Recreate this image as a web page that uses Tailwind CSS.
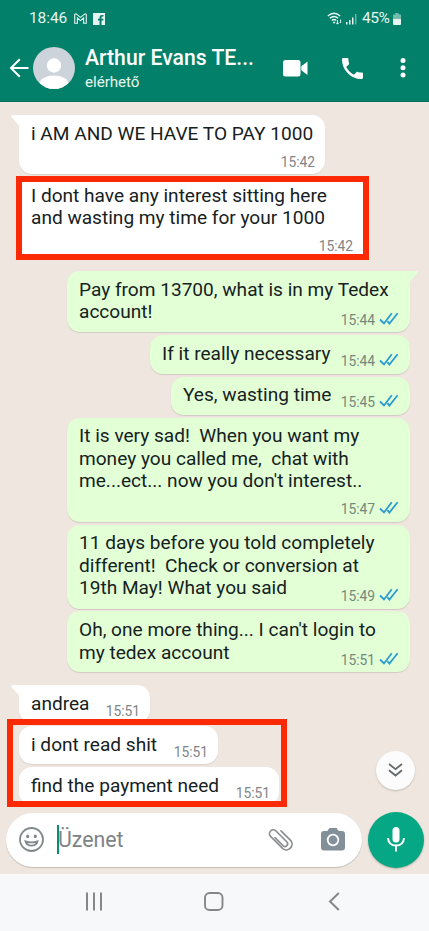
<!DOCTYPE html>
<html lang="hu">
<head>
<meta charset="utf-8">
<title>Chat</title>
<script src="https://cdn.jsdelivr.net/npm/@tailwindcss/browser@4"></script>
</head>
<body class="bg-[#efe7df] overflow-hidden">
<svg class="hidden">
  <symbol id="ticks" viewBox="0 0 20 13"><path d="M1 7.5 L5 11.5 L12.8 1.2 M8.4 9.2 L10.4 11.5 L18.6 1.2" fill="none" stroke="#2b9bd0" stroke-width="1.8"/></symbol>
</svg>
<div class="relative flex flex-col w-[429px] h-[931px] overflow-hidden font-[Roboto,sans-serif] text-[#16211e]">

  <header class="h-[102px] shrink-0 bg-[#028069] border-b border-[#0b6f5c] text-white flex flex-col">
    <div class="h-[36px] pt-[1px] pl-[29px] pr-[28px] flex items-center text-[15.5px] text-[#e6f5f0]">
      <span class="w-[39px] tracking-[-0.1px]">18:46</span>
      <svg class="ml-[6px] w-[13px] h-[11px]" viewBox="0 0 13 11" fill="none" stroke="currentColor" stroke-width="1.1"><path d="M.7 10.2V1.6Q1.2.5 2.4 1.1L6.5 4.4 10.6 1.1Q11.8.5 12.3 1.6V10.2H9.6V5L6.5 7.6 3.4 5V10.2Z"/></svg>
      <svg class="ml-[6px] w-[12px] h-[12px]" viewBox="0 0 12 12"><path fill="currentColor" d="M0 0H12V12H8.5V7.6H10.2L10.5 5.7H8.5V4.5Q8.5 3.6 9.5 3.6H10.5V2H9Q6.5 2 6.5 4.4V5.7H4.9V7.6H6.5V12H0Z"/></svg>
      <span class="flex-1"></span>
      <svg class="w-[16px] h-[13px]" viewBox="0 0 16 13" fill="none" stroke="currentColor" stroke-width="1.4"><path d="M.8 4Q7 -1.6 13.2 4M2.8 6.3Q7 2.6 11.2 6.3M4.8 8.5Q7 6.6 9.2 8.5"/><circle cx="7" cy="10.6" r="1" fill="currentColor" stroke="none"/><path stroke-width="1" d="M10.5 8V12M9 10.6l1.5 1.6 1.5-1.6M13.6 11V7.5"/></svg>
      <svg class="ml-[3px] w-[11px] h-[12px]" viewBox="0 0 11 12" fill="currentColor"><path d="M0 9h1.5v2.5H0zM3 7h1.5v4.500H3zM6 4.500h1.500v7H6z"/><path opacity=".45" d="M9 1h1.500v10.500H9z"/></svg>
      <span class="ml-[5px] w-[29px] tracking-[-0.4px]">45%</span>
      <svg class="ml-[2px] w-[8px] h-[12px]" viewBox="0 0 8 12" fill="currentColor"><path opacity=".5" d="M2.300 0h3.400v1.500H8V6H0V1.500h2.300z"/><path d="M0 6h8v5a1 1 0 0 1-1 1H1a1 1 0 0 1-1-1z"/></svg>
    </div>
    <div class="h-[65px] flex items-center pl-[9px] pb-[1px]">
      <svg class="w-[20px] h-[20px]" viewBox="0 0 20 20" fill="none" stroke="white" stroke-width="2"><path d="M19.500 10H2M10.800 1.200L2 10l8.800 8.800"/></svg>
      <svg class="ml-[4px] w-[42px] h-[42px]" viewBox="0 0 42 42"><defs><clipPath id="av"><circle cx="21" cy="21" r="21"/></clipPath></defs><g clip-path="url(#av)"><path fill="#cdd3da" d="M0 0h42v42H0z"/><circle cx="21" cy="18.500" r="7.200" fill="#fff"/><ellipse cx="21" cy="37" rx="14.500" ry="8.500" fill="#fff"/></g></svg>
      <div class="ml-[10px] w-[180px] pt-[2px] flex flex-col whitespace-nowrap">
        <span class="text-[21.2px] leading-[25px] font-medium">Arthur Evans TE...</span>
        <span class="text-[15.2px] leading-[24px] tracking-[-0.05px] text-[#e6f5f0]">elérhető</span>
      </div>
      <svg class="ml-[18px] w-[25px] h-[17px]" viewBox="0 0 25 17" fill="#fff"><rect width="17.500" height="16.500" rx="2.500"/><path d="M18.300 6.200L24.500 1.500V15L18.300 10.300z"/></svg>
      <svg class="ml-[34px] w-[21px] h-[21px]" viewBox="3 3 18 18" fill="#fff"><path d="M6.620 10.790c1.440 2.830 3.760 5.140 6.590 6.590l2.200-2.200c.27-.27.67-.36 1.020-.24 1.120.37 2.330.57 3.570.57.550 0 1 .45 1 1V20c0 .55-.45 1-1 1-9.390 0-17-7.610-17-17 0-.55.45-1 1-1h3.500c.55 0 1 .45 1 1 0 1.250.200 2.450.570 3.570.110.350.030.740-.250 1.020l-2.200 2.200z"/></svg>
      <svg class="ml-[37px] w-[6px] h-[20px]" viewBox="0 0 6 20" fill="#fff"><circle cx="3" cy="2.600" r="2.500"/><circle cx="3" cy="9.800" r="2.500"/><circle cx="3" cy="17" r="2.500"/></svg>
    </div>
  </header>

  <main class="h-[772px] shrink-0 pt-[12.5px] pl-[19px] pr-[19px] flex flex-col items-start text-[19.08px] leading-[22.7px] whitespace-pre">
    <div class="relative grid w-[306px] h-[59.5px] bg-white rounded-[13px] rounded-tl-none pl-[12px] pr-[10px] pt-[8px] pb-[5px] shadow-[0_1px_1px_#00000018]">
      <svg class="absolute -left-[8px] top-0 w-[9px] h-[12px]" viewBox="0 0 9 12"><path fill="#fff" d="M9 0H1.500Q-.8.400 1 2.500L8 10.500 9 12z"/></svg>
      <p class="[grid-area:1/1]">i AM AND WE HAVE TO PAY 1000</p>
      <time class="[grid-area:1/1] self-end justify-self-end text-[13.800px] leading-[14px] text-[#7f8486]">15:42</time>
    </div>
    <div class="-ml-[3px] mt-[2px] grid w-[353px] h-[84px] border-[6px] border-[#fb2a04] bg-white pl-[9px] pr-[10px] pt-[2.500px] pb-[1px]">
      <p class="[grid-area:1/1]"><span class="block w-fit">I dont have any interest sitting here</span><span class="block w-fit">and wasting my time for your 1000</span></p>
      <time class="[grid-area:1/1] self-end justify-self-end text-[13.800px] leading-[14px] text-[#7f8486]">15:42</time>
    </div>

    <div class="relative self-end mt-[10.500px] grid w-[343px] h-[61.500px] bg-[#e2ffd6] rounded-[13px] rounded-tr-none pl-[12px] pr-[11px] pt-[8px] pb-[5.500px] shadow-[0_1px_1px_#00000020]">
      <svg class="absolute -right-[8px] top-0 w-[9px] h-[12px]" viewBox="0 0 9 12"><path fill="#e2ffd6" d="M0 0H7.500Q9.800.400 8 2.500L1 10.500 0 12z"/></svg>
      <p class="[grid-area:1/1]"><span class="block w-fit">Pay from 13700, what is in my Tedex</span><span class="block w-fit">account!</span></p>
      <time class="[grid-area:1/1] self-end justify-self-end flex gap-[4px] text-[13.800px] leading-[14px] text-[#75877a]">15:44<svg class="-mt-[1px] w-[20px] h-[13px]"><use href="#ticks"/></svg></time>
    </div>
    <div class="self-end mt-[3px] grid w-[260px] h-[38.500px] bg-[#e2ffd6] rounded-[13px] pl-[12px] pr-[11px] pt-[8px] pb-[6px] shadow-[0_1px_1px_#00000020]">
      <p class="[grid-area:1/1]">If it really necessary</p>
      <time class="[grid-area:1/1] self-end justify-self-end flex gap-[4px] text-[13.800px] leading-[14px] text-[#75877a]">15:44<svg class="-mt-[1px] w-[20px] h-[13px]"><use href="#ticks"/></svg></time>
    </div>
    <div class="self-end mt-[3px] grid w-[239px] h-[38px] bg-[#e2ffd6] rounded-[13px] pl-[12px] pr-[11px] pt-[7px] pb-[6px] shadow-[0_1px_1px_#00000020]">
      <p class="[grid-area:1/1]">Yes, wasting time</p>
      <time class="[grid-area:1/1] self-end justify-self-end flex gap-[4px] text-[13.800px] leading-[14px] text-[#75877a]">15:45<svg class="-mt-[1px] w-[20px] h-[13px]"><use href="#ticks"/></svg></time>
    </div>
    <div class="self-end mt-[3px] grid w-[343px] h-[104px] bg-[#e2ffd6] rounded-[13px] pl-[12px] pr-[11px] pt-[7.500px] pb-[5.500px] shadow-[0_1px_1px_#00000020]">
      <p class="[grid-area:1/1]"><span class="block w-fit">It is very sad!  When you want my</span><span class="block w-fit">money you called me,  chat with</span><span class="block w-fit">me...ect... now you don't interest..</span></p>
      <time class="[grid-area:1/1] self-end justify-self-end flex gap-[4px] text-[13.800px] leading-[14px] text-[#75877a]">15:47<svg class="-mt-[1px] w-[20px] h-[13px]"><use href="#ticks"/></svg></time>
    </div>
    <div class="self-end mt-[3px] grid w-[343px] h-[84px] bg-[#e2ffd6] rounded-[13px] pl-[12px] pr-[11px] pt-[7.500px] pb-[6px] shadow-[0_1px_1px_#00000020]">
      <p class="[grid-area:1/1]"><span class="block w-fit">11 days before you told completely</span><span class="block w-fit">different!  Check or conversion at</span><span class="block w-fit">19th May! What you said</span></p>
      <time class="[grid-area:1/1] self-end justify-self-end flex gap-[4px] text-[13.800px] leading-[14px] text-[#75877a]">15:49<svg class="-mt-[1px] w-[20px] h-[13px]"><use href="#ticks"/></svg></time>
    </div>
    <div class="self-end mt-[2.500px] grid w-[343px] h-[61px] bg-[#e2ffd6] rounded-[13px] pl-[12px] pr-[11px] pt-[8px] pb-[5px] shadow-[0_1px_1px_#00000020]">
      <p class="[grid-area:1/1]"><span class="block w-fit">Oh, one more thing... I can't login to</span><span class="block w-fit">my tedex account</span></p>
      <time class="[grid-area:1/1] self-end justify-self-end flex gap-[4px] text-[13.800px] leading-[14px] text-[#75877a]">15:51<svg class="-mt-[1px] w-[20px] h-[13px]"><use href="#ticks"/></svg></time>
    </div>

    <div class="relative mt-[12.500px] grid w-[131px] h-[38px] bg-white rounded-[13px] rounded-tl-none pl-[12px] pr-[10px] pt-[8px] pb-[5px] shadow-[0_1px_1px_#00000018]">
      <svg class="absolute -left-[8px] top-0 w-[9px] h-[12px]" viewBox="0 0 9 12"><path fill="#fff" d="M9 0H1.500Q-.8.400 1 2.500L8 10.500 9 12z"/></svg>
      <p class="[grid-area:1/1]">andrea</p>
      <time class="[grid-area:1/1] self-end justify-self-end text-[13.800px] leading-[14px] text-[#7f8486]">15:51</time>
    </div>
    <div class="mt-[3px] grid w-[199px] h-[38.500px] bg-white rounded-[13px] pl-[12px] pr-[10px] pt-[8px] pb-[5px] shadow-[0_1px_1px_#00000018]">
      <p class="[grid-area:1/1]">i dont read shit</p>
      <time class="[grid-area:1/1] self-end justify-self-end text-[13.800px] leading-[14px] text-[#7f8486]">15:51</time>
    </div>
    <div class="mt-[2.500px] grid w-[260px] h-[38px] bg-white rounded-[13px] pl-[12px] pr-[9px] pt-[8px] pb-[5px]">
      <p class="[grid-area:1/1]">find the payment need</p>
      <time class="[grid-area:1/1] self-end justify-self-end text-[13.800px] leading-[14px] text-[#7f8486]">15:51</time>
    </div>

    <div class="-ml-[13px] mt-[7px] w-[410px] h-[56px] shrink-0 flex items-center gap-[6px]">
      <div class="w-[356px] h-[54px] shrink-0 bg-white rounded-full flex items-center pl-[13px] shadow-[0_1px_1px_#00000030]">
        <svg class="w-[25px] h-[25px]" viewBox="0 0 25 25" fill="none" stroke="#81898c" stroke-width="1.800"><circle cx="12.500" cy="12.500" r="11.500"/><ellipse cx="8.700" cy="9.300" rx="1.500" ry="1.900" fill="#81898c" stroke="none"/><ellipse cx="16.300" cy="9.300" rx="1.500" ry="1.900" fill="#81898c" stroke="none"/><path d="M6.500 14.300Q12.500 16.600 18.500 14.300Q17.500 18.600 12.500 18.600Q7.500 18.600 6.500 14.300Z"/></svg>
        <span class="ml-[13px] w-[2px] h-[29px] bg-[#078e70]"></span>
        <span class="-ml-[1px] mt-[2px] w-[210px] text-[21.300px] text-[#7d8487]">Üzenet</span>
        <svg class="w-[26px] h-[24px] shrink-0" viewBox="0 0 26 24" fill="none" stroke="#8b8f91" stroke-width="1.700" stroke-linecap="round"><path d="M13 2.800L22.800 12.600A5.700 5.700 0 0 1 14.800 20.600L2.600 8.400A3.800 3.800 0 0 1 8 3L19 14A2.700 2.700 0 0 1 15.200 17.800L7 9.600"/></svg>
        <svg class="ml-[27px] w-[24px] h-[23px] shrink-0" viewBox="0 0 24 23"><path fill="#82909a" d="M8.500 0h7l2.200 3H21a3 3 0 0 1 3 3v13.500a3 3 0 0 1-3 3H3a3 3 0 0 1-3-3V6a3 3 0 0 1 3-3h3.300z"/><circle cx="12" cy="12" r="5.300" fill="none" stroke="#fff" stroke-width="1.800"/></svg>
      </div>
      <div class="w-[56px] h-[56px] shrink-0 rounded-full bg-[#06a784] flex items-center justify-center shadow-[0_1px_2px_#00000040]">
        <svg class="w-[18px] h-[25px]" viewBox="0 0 18 25"><rect x="5.500" width="7" height="15.500" rx="3.500" fill="#fff"/><path d="M1 11Q1.600 18.500 9 18.500T17 11M9 18.500V24.500" fill="none" stroke="#fff" stroke-width="2"/></svg>
      </div>
    </div>
  </main>

  <nav class="flex-1 bg-[#f7f8fa] flex items-start pt-[18px] pl-[85px]">
    <svg class="w-[18px] h-[19px]" viewBox="0 0 18 19" stroke="#868789" stroke-width="2"><path d="M2 .5v18M9 .5v18M16 .5v18"/></svg>
    <svg class="ml-[101px] w-[20px] h-[19px]" viewBox="0 0 20 19"><rect x="1" y="1" width="17.500" height="17" rx="4.500" fill="none" stroke="#868789" stroke-width="1.900"/></svg>
    <svg class="ml-[104px] w-[12px] h-[19px]" viewBox="0 0 12 19"><path d="M10.800 1L2 9.500l8.800 8.500" fill="none" stroke="#868789" stroke-width="2"/></svg>
  </nav>

  <div class="absolute left-[7px] top-[719px] w-[280px] h-[88px] border-[6px] border-[#fb2a04]"></div>
  <div class="absolute left-[376px] top-[750.500px] w-[39px] h-[39px] rounded-full bg-[#fcfcfc] flex items-center justify-center shadow-[0_1px_2px_#00000030]">
    <svg class="w-[15px] h-[14px]" viewBox="0 0 15 14" fill="none" stroke="#65696b" stroke-width="1.800"><path d="M1 1L7.500 6.200 14 1M1 7.300L7.500 12.500 14 7.300"/></svg>
  </div>
</div>
</body>
</html>
